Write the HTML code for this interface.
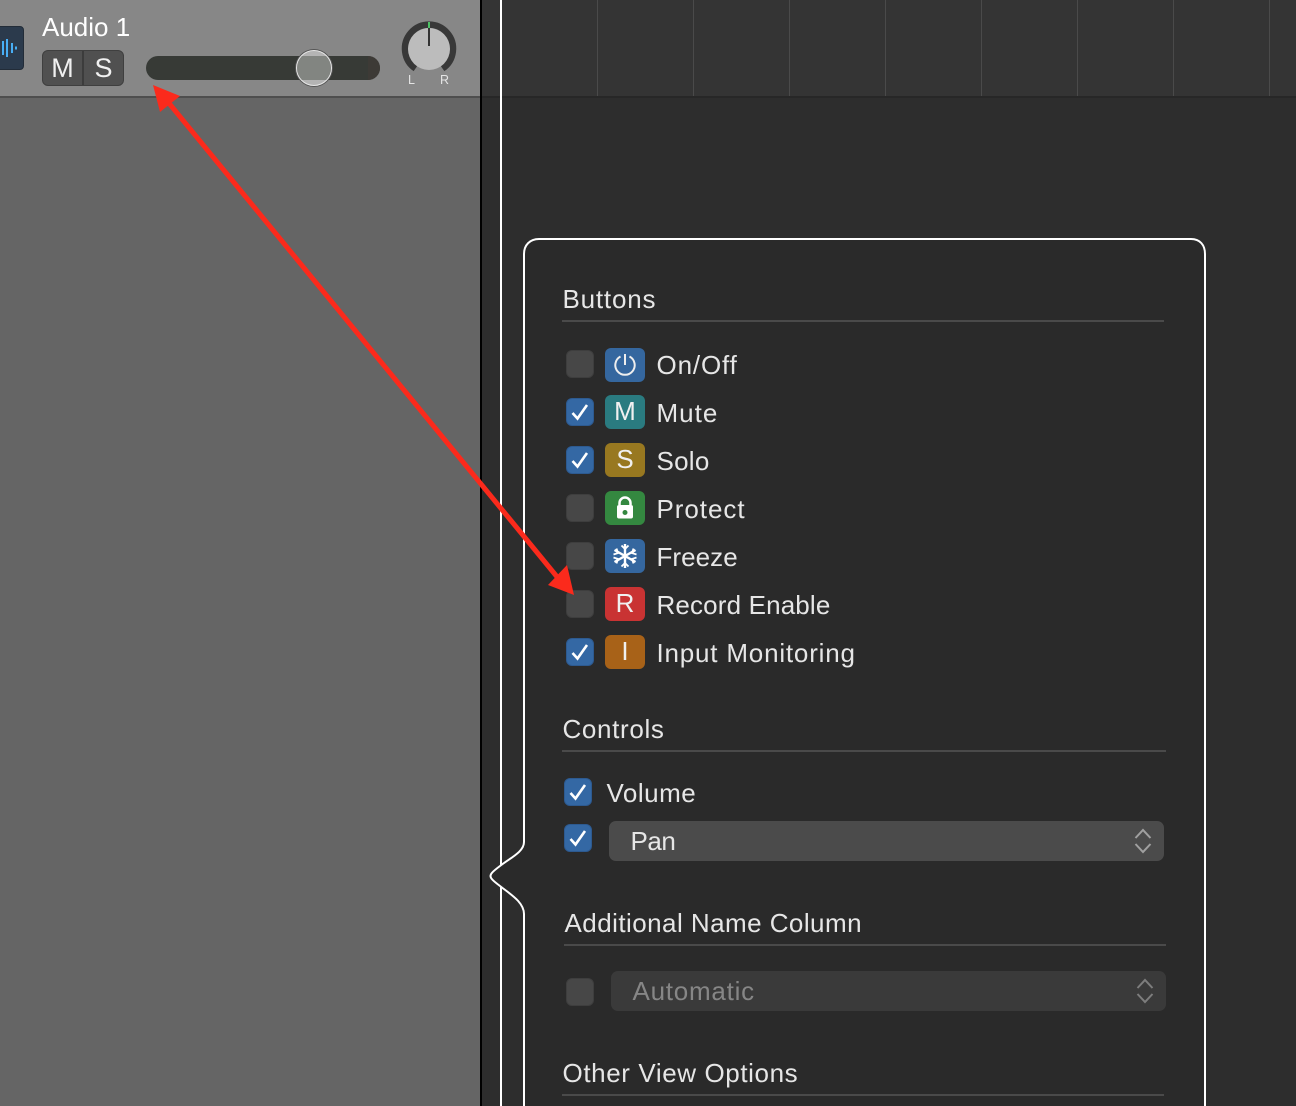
<!DOCTYPE html>
<html><head><meta charset="utf-8"><style>
html,body{margin:0;padding:0;background:#2e2e2e}
#p{position:relative;width:1296px;height:1106px;overflow:hidden;background:#2c2c2c;font-family:"Liberation Sans",sans-serif;color:#e6e6e6}
#p div{position:absolute;box-sizing:border-box}
.t{font-size:26px;line-height:30px;white-space:nowrap;letter-spacing:.55px}
.hl{height:2px;background:#4a4a4a}
.c{width:28px;height:28px;left:566px;border-radius:6px;background:#474747;border:1px solid #3e3e3e}
.c.on{background:#3468a4;border-color:#2d5a90}
.c svg{position:absolute;left:0;top:0}
.i{left:605px;width:40px;height:34px;border-radius:6px;text-align:center;font-size:26px;line-height:32px;color:#f0f0f0}
.i svg{position:absolute;left:0;top:0}
</style></head><body><div id="p">
<div style="left:0;top:0;width:481px;height:1106px;background:#656565"></div>
<div style="left:0;top:0;width:481px;height:96px;background:#878787"></div>
<div style="left:0;top:96px;width:481px;height:2px;background:#4e4e4e"></div>
<div style="left:482px;top:0;width:814px;height:96px;background:#343434"></div>
<div style="left:482px;top:96px;width:814px;height:2px;background:#272727"></div>
<div style="left:482px;top:98px;width:814px;height:1008px;background:#2d2d2d"></div>
<div style="left:597px;top:0;width:1px;height:96px;background:#4a4a4a"></div>
<div style="left:693px;top:0;width:1px;height:96px;background:#4a4a4a"></div>
<div style="left:789px;top:0;width:1px;height:96px;background:#4a4a4a"></div>
<div style="left:885px;top:0;width:1px;height:96px;background:#4a4a4a"></div>
<div style="left:981px;top:0;width:1px;height:96px;background:#4a4a4a"></div>
<div style="left:1077px;top:0;width:1px;height:96px;background:#4a4a4a"></div>
<div style="left:1173px;top:0;width:1px;height:96px;background:#4a4a4a"></div>
<div style="left:1269px;top:0;width:1px;height:96px;background:#4a4a4a"></div>
<div style="left:480px;top:0;width:2px;height:1106px;background:#000"></div>
<div style="left:500px;top:0;width:2px;height:1106px;background:#fff"></div>

<!-- track icon -->
<div style="left:-12px;top:26px;width:36px;height:44px;border-radius:4px;background:#2b3a4c;border:1px solid #222c38"></div>
<svg style="position:absolute;left:0;top:36px" width="24" height="24"><path d="M3 5v14M7 3v18M12 7v10M16 10.500v3" stroke="#48aef5" stroke-width="2" fill="none"/></svg>

<div style="left:42px;top:12px;font-size:26px;line-height:30px;color:#fff;white-space:nowrap">Audio 1</div>
<div style="left:42px;top:50px;width:82px;height:36px;border-radius:6px;background:#505050;border:1px solid #3f3f3f"></div>
<div style="left:82px;top:51px;width:2px;height:34px;background:#3c3c3c"></div>
<div style="left:42px;top:53px;width:41px;text-align:center;font-size:27px;line-height:30px;color:#f0f0f0">M</div>
<div style="left:83px;top:53px;width:41px;text-align:center;font-size:27px;line-height:30px;color:#f0f0f0">S</div>
<div style="left:146px;top:56px;width:234px;height:24px;border-radius:12px;background:#373a36"></div>
<div style="left:368px;top:56px;width:12px;height:24px;border-radius:0 12px 12px 0;background:#3d3a36"></div>
<div style="left:296px;top:50px;width:36px;height:36px;border-radius:50%;background:#b4b4b4;border:1px solid #e8e8e8;box-shadow:0 0 0 1px #555 ;overflow:hidden"><div style="left:0;top:5px;width:34px;height:24px;background:#828581"></div></div>

<svg style="position:absolute;left:395px;top:15px" width="70" height="75">
<path d="M20.500 53.500A24 24 0 1 1 47.500 53.500" fill="none" stroke="#383838" stroke-width="6.500"/>
<circle cx="34" cy="34" r="21" fill="#bcbcbc"/>
<path d="M34 7v6" stroke="#4fd16a" stroke-width="1.800"/>
<path d="M34 13v18" stroke="#333" stroke-width="2"/>
<text x="13" y="69" font-family="Liberation Sans" font-size="12.500" fill="#e4e4e4">L</text>
<text x="45" y="69" font-family="Liberation Sans" font-size="12.500" fill="#e4e4e4">R</text>
</svg>

<!-- popover -->
<svg style="position:absolute;left:480px;top:230px" width="740" height="876">
<path d="M44 876V684C44 672 30 664 20 656C12 650 10.500 648 10.500 646C10.500 644 12 642 20 636C30 628 44 622 44 612V24C44 15 50 9 59 9H711C720 9 725 15 725 24V876" fill="#2a2a2a" stroke="#fff" stroke-width="2"/>
</svg>

<div class="t" style="left:562.500px;top:284px;letter-spacing:.8px">Buttons</div>
<div class="hl" style="left:562px;top:320px;width:602px"></div>

<div class="c" style="top:350px"></div>
<div class="i" style="top:348px;background:#35679f"><svg width="40" height="34"><path d="M15.500 8.500A9.700 9.700 0 1 0 24.500 8.500M20 6V17" fill="none" stroke="#eee" stroke-width="2"/></svg></div>
<div class="t" style="left:656.500px;top:350px;letter-spacing:.85px">On/Off</div>

<div class="c on" style="top:398px"><svg width="26" height="26"><path d="M5.500 14L10.500 19.500L20 6" fill="none" stroke="#fff" stroke-width="2.600"/></svg></div>
<div class="i" style="top:395px;background:#2a7b80">M</div>
<div class="t" style="left:656.500px;top:398px;letter-spacing:1px">Mute</div>

<div class="c on" style="top:446px"><svg width="26" height="26"><path d="M5.500 14L10.500 19.500L20 6" fill="none" stroke="#fff" stroke-width="2.600"/></svg></div>
<div class="i" style="top:443px;background:#987820">S</div>
<div class="t" style="left:656.500px;top:446px;letter-spacing:.25px">Solo</div>

<div class="c" style="top:494px"></div>
<div class="i" style="top:491px;background:#348840"><svg width="40" height="34"><path d="M14.500 14V12A5.500 5.500 0 0 1 25.500 12V14" fill="none" stroke="#fff" stroke-width="2.500"/><rect x="12" y="14" width="16" height="13.500" rx="2" fill="#fff"/><circle cx="20" cy="21.500" r="2.500" fill="#348840"/></svg></div>
<div class="t" style="left:656.500px;top:494px;letter-spacing:.95px">Protect</div>

<div class="c" style="top:542px"></div>
<div class="i" style="top:539px;background:#35679f"><svg width="40" height="34"><g stroke="#fff" stroke-width="2.400" fill="none"><path d="M20 5V29M9.500 11L30.500 23M30.500 11L9.500 23"/><path d="M16.500 6.500L20 10L23.500 6.500M16.500 27.500L20 24L23.500 27.500M8.500 15.500L13 14L11.500 9.500M31.500 15.500L27 14L28.500 9.500M8.500 18.500L13 20L11.500 24.500M31.500 18.500L27 20L28.500 24.500" stroke-width="1.800"/></g></svg></div>
<div class="t" style="left:656.500px;top:542px;letter-spacing:.05px">Freeze</div>

<div class="c" style="top:590px"></div>
<div class="i" style="top:587px;background:#c93333">R</div>
<div class="t" style="left:656.500px;top:590px;letter-spacing:.15px">Record Enable</div>

<div class="c on" style="top:638px"><svg width="26" height="26"><path d="M5.500 14L10.500 19.500L20 6" fill="none" stroke="#fff" stroke-width="2.600"/></svg></div>
<div class="i" style="top:635px;background:#a86218">I</div>
<div class="t" style="left:656.500px;top:638px;letter-spacing:.8px">Input Monitoring</div>

<div class="t" style="left:562.500px;top:714px;letter-spacing:.65px">Controls</div>
<div class="hl" style="left:562px;top:750px;width:604px"></div>

<div class="c on" style="top:778px;left:564px"><svg width="26" height="26"><path d="M5.500 14L10.500 19.500L20 6" fill="none" stroke="#fff" stroke-width="2.600"/></svg></div>
<div class="t" style="left:606.500px;top:778px;letter-spacing:.5px">Volume</div>
<div class="c on" style="top:824px;left:564px"><svg width="26" height="26"><path d="M5.500 14L10.500 19.500L20 6" fill="none" stroke="#fff" stroke-width="2.600"/></svg></div>
<div style="left:609px;top:821px;width:555px;height:40px;border-radius:7px;background:#4b4b4b"></div>
<div class="t" style="left:630.500px;top:826px;letter-spacing:-.45px">Pan</div>
<svg style="position:absolute;left:1133px;top:828px" width="20" height="28"><path d="M2.500 10L10 2L17.500 10M2.500 16L10 24L17.500 16" fill="none" stroke="#a0a0a0" stroke-width="2"/></svg>

<div class="t" style="left:564.500px;top:908px;letter-spacing:.45px">Additional Name Column</div>
<div class="hl" style="left:564px;top:944px;width:602px"></div>

<div class="c" style="top:978px"></div>
<div style="left:611px;top:971px;width:555px;height:40px;border-radius:7px;background:#3a3a3a"></div>
<div class="t" style="left:632.500px;top:976px;color:#868686;letter-spacing:.75px">Automatic</div>
<svg style="position:absolute;left:1135px;top:978px" width="20" height="28"><path d="M2.500 10L10 2L17.500 10M2.500 16L10 24L17.500 16" fill="none" stroke="#7d7d7d" stroke-width="2"/></svg>

<div class="t" style="left:562.500px;top:1058px;letter-spacing:.6px">Other View Options</div>
<div class="hl" style="left:562px;top:1094px;width:602px"></div>

<!-- red arrow -->
<svg style="position:absolute;left:0;top:0" width="1296" height="1106">
<path d="M168 102L558 578" stroke="#fb2a1c" stroke-width="5" fill="none"/>
<path d="M153 85L180 96L160 112ZM574 595L548 585L567 565Z" fill="#fb2a1c"/>
</svg>
</div></body></html>
